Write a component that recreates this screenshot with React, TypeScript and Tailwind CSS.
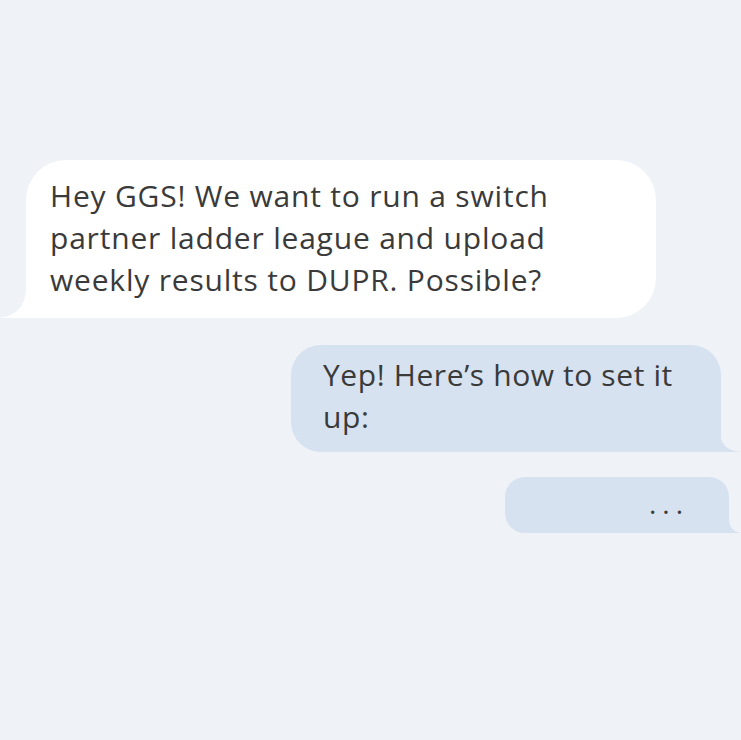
export default function App() {
  return (
    <div
      className="w-[741px] h-[740px] bg-[#eff3f8] overflow-hidden text-[#3a3a3a]"
      style={{ fontFamily: '"Open Sans", Lato, sans-serif' }}
    >
      <div className="flex flex-col pt-[160px]">
        {/* Incoming */}
        <div className="relative ml-[26px] w-[630px] h-[158px] bg-white rounded-tl-[40px] rounded-tr-[40px] rounded-br-[40px] pl-6 pt-[15px]">
          <svg
            className="absolute left-[-26px] bottom-0"
            width="27"
            height="30"
            viewBox="0 0 27 30"
          >
            <path d="M26 0 L27 0 L27 30 L0 30 C14 28 26 20 26 0 Z" fill="#ffffff" />
          </svg>
          <p className="text-[30px] leading-[42px] tracking-[0.8px] whitespace-nowrap">
            Hey GGS! We want to run a switch
            <br />
            partner ladder league and upload
            <br />
            weekly results to DUPR. Possible?
          </p>
        </div>

        {/* Reply */}
        <div className="relative ml-[291px] mt-[27px] w-[430px] h-[107px] bg-[#d6e2f0] rounded-tl-[30px] rounded-tr-[30px] rounded-bl-[30px] pl-8 pt-[9px]">
          <svg
            className="absolute right-[-20px] bottom-0"
            width="21"
            height="16"
            viewBox="0 0 21 16"
          >
            <path d="M1 0 L0 0 L0 16 L21 16 C10 15 1 10 1 0 Z" fill="#d6e2f0" />
          </svg>
          <p className="text-[30px] leading-[42px] tracking-[0.6px] whitespace-nowrap">
            Yep! Here’s how to set it
            <br />
            up:
          </p>
        </div>

        {/* Typing */}
        <div className="relative ml-[505px] mt-[25px] w-[224px] h-[56px] bg-[#d6e2f0] rounded-tl-[20px] rounded-tr-[20px] rounded-bl-[20px] flex items-center justify-end pr-[40px]">
          <svg
            className="absolute right-[-12px] bottom-0"
            width="13"
            height="14"
            viewBox="0 0 13 14"
          >
            <path d="M1 0 L0 0 L0 14 L13 14 C6 13 1 9 1 0 Z" fill="#d6e2f0" />
          </svg>
          <span className="text-[28px] leading-none tracking-[6px] mt-[-4px]">...</span>
        </div>
      </div>
    </div>
  )
}
